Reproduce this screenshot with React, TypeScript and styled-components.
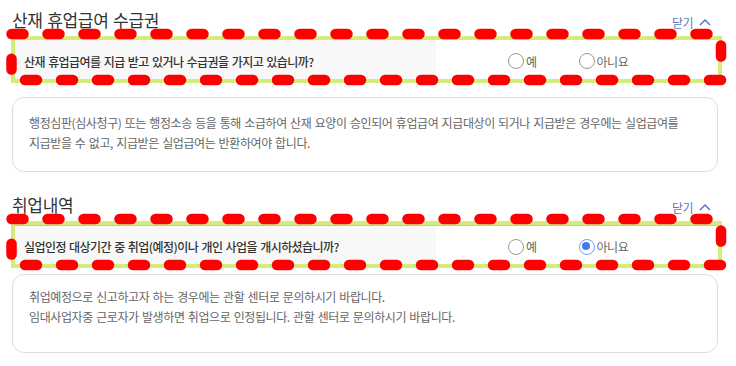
import React from "react";
import styled, { createGlobalStyle } from "styled-components";

const Global = createGlobalStyle`
  html, body { margin: 0; padding: 0; background: #fff; }
  body { font-family: "Noto Sans CJK KR", "Noto Sans", sans-serif; color: #333; word-break: keep-all; }
  * { box-sizing: border-box; }
`;

const Page = styled.div`
  padding: 0 14px 0 12px;
`;

const Section = styled.section<{ $mb?: number }>`
  display: flex;
  flex-direction: column;
  margin-bottom: ${(p) => p.$mb ?? 0}px;
`;

const Header = styled.div`
  display: flex;
  align-items: center;
  justify-content: space-between;
  padding-top: 8px;
  padding-right: 11px;
  margin-bottom: 4px;
`;

const Title = styled.h2`
  margin: 0;
  font-size: 17px;
  line-height: 24px;
  font-weight: 400;
  letter-spacing: -0.3px;
  word-spacing: 1px;
  color: #333;
`;

const Toggle = styled.button`
  display: flex;
  align-items: center;
  gap: 6px;
  border: 0;
  background: none;
  padding: 0;
  font: inherit;
  font-size: 12px;
  letter-spacing: -0.5px;
  color: #5a78b8;
  cursor: pointer;
  margin-top: 4px;
`;

const Highlight = styled.div`
  position: relative;
  margin-left: -1px;
  border: 4px solid #d4ec7c;
`;

const Row = styled.div<{ $rule?: boolean }>`
  display: grid;
  grid-template-columns: 421px 1fr;
  height: 39px;
  border-top: ${(p) => (p.$rule ? "1px solid #c4c4c4" : "0")};
`;

const Question = styled.div`
  display: flex;
  align-items: center;
  padding: 3px 0 0 9px;
  background: #f8f8f8;
  font-size: 12px;
  font-weight: 500;
  letter-spacing: -0.55px;
  word-spacing: 1px;
  color: #333;
`;

const Answers = styled.div`
  display: flex;
  align-items: center;
  padding: 3px 0 0 72px;
  gap: 42px;
`;

const Option = styled.label`
  display: flex;
  align-items: center;
  gap: 2px;
  font-size: 12px;
  letter-spacing: -0.5px;
  color: #666;
`;

const RadioDot = styled.span<{ $on?: boolean }>`
  position: relative;
  width: 16px;
  height: 16px;
  border-radius: 50%;
  border: 1.5px solid ${(p) => (p.$on ? "#6f9cf5" : "#9a9a9a")};
  background: #fff;
  &::after {
    content: "";
    display: ${(p) => (p.$on ? "block" : "none")};
    position: absolute;
    left: 2.5px;
    top: 2.5px;
    width: 8px;
    height: 8px;
    border-radius: 50%;
    background: #3f7cf2;
  }
`;

const Marker = styled.svg`
  position: absolute;
  left: -4px;
  top: -4px;
  width: 100%;
  height: 100%;
  overflow: visible;
  pointer-events: none;
`;

const InfoBox = styled.div<{ $mt: number; $pt: number; $pb: number }>`
  margin-top: ${(p) => p.$mt}px;
  margin-right: 4px;
  padding: ${(p) => p.$pt}px 16px ${(p) => p.$pb}px;
  border: 1px solid #dedede;
  border-radius: 12px;
  font-size: 12px;
  line-height: 20px;
  letter-spacing: -0.4px;
  word-spacing: 1px;
  color: #666;
`;

const Para = styled.p`
  margin: 0;
`;

const Chevron = () => (
  <svg width="12" height="8" viewBox="0 0 12 8">
    <polyline points="1,7 6,2 11,7" fill="none" stroke="#4a6fc0" strokeWidth="1.4" />
  </svg>
);

const DashMarker = () => (
  <Marker>
    <g stroke="#ff0000" strokeWidth="10.5" strokeLinecap="round" fill="none">
      <line x1="0.5" y1="-2" x2="710" y2="-2" strokeDasharray="12 24" />
      <line x1="14" y1="44" x2="710" y2="44" strokeDasharray="12 24" />
      <line x1="710" y1="9.5" x2="710" y2="20.5" />
      <line x1="0.5" y1="22.8" x2="0.5" y2="33.5" />
    </g>
  </Marker>
);

type Props = {
  title: string;
  question: string;
  checked: "yes" | "no" | null;
  rule?: boolean;
  mt: number;
  pt: number;
  pb: number;
  mb?: number;
  lines: string[];
};

const Block = ({ title, question, checked, rule, mt, pt, pb, mb, lines }: Props) => (
  <Section $mb={mb}>
    <Header>
      <Title>{title}</Title>
      <Toggle>
        닫기 <Chevron />
      </Toggle>
    </Header>
    <Highlight>
      <Row $rule={rule}>
        <Question>{question}</Question>
        <Answers>
          <Option>
            <RadioDot $on={checked === "yes"} />예
          </Option>
          <Option>
            <RadioDot $on={checked === "no"} />아니요
          </Option>
        </Answers>
      </Row>
      <DashMarker />
    </Highlight>
    <InfoBox $mt={mt} $pt={pt} $pb={pb}>
      {lines.map((l, i) => (
        <Para key={i}>{l}</Para>
      ))}
    </InfoBox>
  </Section>
);

export default function App() {
  return (
    <Page>
      <Global />
      <Block
        title="산재 휴업급여 수급권"
        question="산재 휴업급여를 지급 받고 있거나 수급권을 가지고 있습니까?"
        checked={null}
        mt={14}
        pt={15}
        pb={18}
        mb={13}
        lines={[
          "행정심판(심사청구) 또는 행정소송 등을 통해 소급하여 산재 요양이 승인되어 휴업급여 지급대상이 되거나 지급받은 경우에는 실업급여를 지급받을 수 없고, 지급받은 실업급여는 반환하여야 합니다.",
        ]}
      />
      <Block
        title="취업내역"
        question="실업인정 대상기간 중 취업(예정)이나 개인 사업을 개시하셨습니까?"
        checked="no"
        rule
        mt={6}
        pt={12}
        pb={25}
        lines={[
          "취업예정으로 신고하고자 하는 경우에는 관할 센터로 문의하시기 바랍니다.",
          "임대사업자중 근로자가 발생하면 취업으로 인정됩니다. 관할 센터로 문의하시기 바랍니다.",
        ]}
      />
    </Page>
  );
}
